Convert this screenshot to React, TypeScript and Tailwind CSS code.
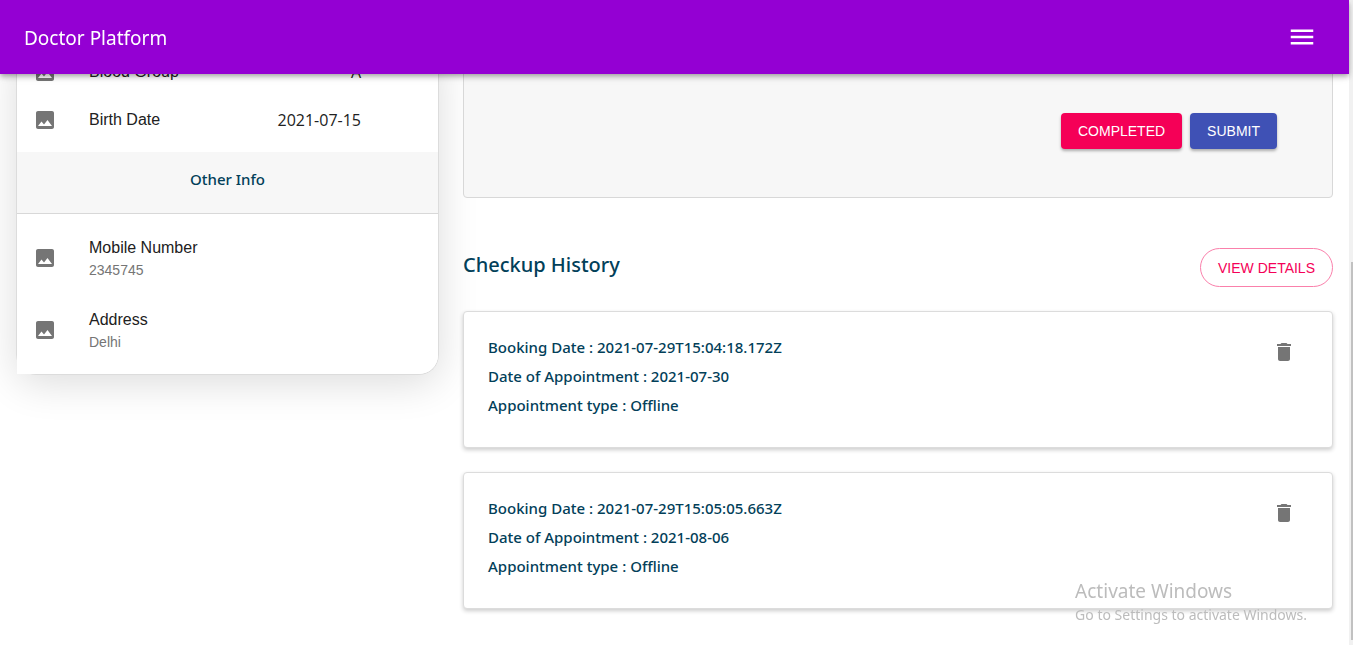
import React from "react";
import { MdDelete, MdImage, MdMenu } from "react-icons/md";

const vitals = [
  { label: "Blood Group", value: "A" },
  { label: "Birth Date", value: "2021-07-15" },
];

const otherInfo = [
  { label: "Mobile Number", value: "2345745" },
  { label: "Address", value: "Delhi" },
];

const bookings = [
  { booked: "2021-07-29T15:04:18.172Z", date: "2021-07-30", type: "Offline" },
  { booked: "2021-07-29T15:05:05.663Z", date: "2021-08-06", type: "Offline" },
];

function Header() {
  return (
    <header className="fixed top-0 right-1 left-0 z-10 flex h-[74px] items-center justify-between bg-[#9400d3] pr-8 pl-6 text-white shadow-[0_2px_4px_-1px_rgba(0,0,0,0.2),0_4px_5px_0_rgba(0,0,0,0.14),0_1px_10px_0_rgba(0,0,0,0.12)]">
      <h1 className="pt-0.5 font-['Noto_Sans',sans-serif] text-[19px] leading-8">Doctor Platform</h1>
      <button type="button" aria-label="Menu">
        <MdMenu className="size-[30px]" />
      </button>
    </header>
  );
}

function PatientCard() {
  return (
    <section className="rounded-b-[20px] border border-t-0 border-[#dcdcdc] shadow-[0_8px_40px_rgba(0,0,0,0.14)]">
      <ul className="bg-white pb-2">
        {vitals.map((row) => (
          <li key={row.label} className="flex h-12 items-center px-4">
            <MdImage className="mr-8 size-6 text-[#757575]" />
            <span className="flex-1 text-base">{row.label}</span>
            <span className="pr-[61px] font-['Open_Sans',sans-serif] text-base">{row.value}</span>
          </li>
        ))}
      </ul>
      <h2 className="border-b border-[#d8d8d8] bg-[#f7f7f7] pt-[15px] pb-[22px] text-center font-['Noto_Sans',sans-serif] text-[15px] leading-6 font-medium text-[#024059]">
        Other Info
      </h2>
      <ul className="rounded-br-[19px] bg-white py-2">
        {otherInfo.map((row) => (
          <li key={row.label} className="flex h-[72px] items-center px-4">
            <MdImage className="mr-8 size-6 text-[#757575]" />
            <div>
              <p className="text-base">{row.label}</p>
              <p className="text-sm text-[#757575]">{row.value}</p>
            </div>
          </li>
        ))}
      </ul>
    </section>
  );
}

function BookingCard({ booked, date, type }: { booked: string; date: string; type: string }) {
  return (
    <li className="flex items-start justify-between rounded border border-[#dcdcdc] bg-white px-6 shadow-[0_2px_4px_rgba(0,0,0,0.2)]">
      <div className="flex flex-col gap-[5px] pt-[23px] pb-[30px] font-['Noto_Sans',sans-serif] text-[15px] leading-6 font-medium text-[#024059]">
        <p>Booking Date : {booked}</p>
        <p>Date of Appointment : {date}</p>
        <p>Appointment type : {type}</p>
      </div>
      <button type="button" aria-label="Delete booking" className="mt-4 p-3 text-[#757575]">
        <MdDelete className="size-6" />
      </button>
    </li>
  );
}

function ActivationNotice() {
  return (
    <aside className="pointer-events-none fixed right-[46px] bottom-5 z-20 font-['Noto_Sans',sans-serif] text-[#bcbcbc]">
      <p className="text-[19px] leading-7">Activate Windows</p>
      <p className="text-sm leading-5">Go to Settings to activate Windows.</p>
    </aside>
  );
}

export default function App() {
  return (
    <div className="flex min-h-screen bg-white font-['Liberation_Sans',Arial,sans-serif] text-[#212121]">
      <Header />
      <main className="grid flex-1 grid-cols-3 items-start gap-6 px-4 pt-12">
        <PatientCard />
        <div className="col-span-2">
          <div className="flex justify-end gap-2 rounded-b border border-[#d8d8d8] bg-[#f7f7f7] pt-16 pr-[55px] pb-12 text-sm text-white">
            <button type="button" className="h-9 rounded bg-[#f50057] px-[17px] shadow-[0_2px_3px_rgba(0,0,0,0.3)]">
              COMPLETED
            </button>
            <button type="button" className="h-9 rounded bg-[#3f51b5] px-[17px] shadow-[0_2px_3px_rgba(0,0,0,0.3)]">
              SUBMIT
            </button>
          </div>
          <div className="mt-[50px] mb-6 flex items-start justify-between">
            <h2 className="font-['Noto_Sans',sans-serif] text-xl leading-[34px] font-medium text-[#024059]">Checkup History</h2>
            <button type="button" className="h-[39px] rounded-[20px] border border-[#fa80ab] px-[17px] text-sm text-[#f50057]">
              VIEW DETAILS
            </button>
          </div>
          <ul className="flex flex-col gap-6">
            {bookings.map((booking) => (
              <BookingCard key={booking.booked} {...booking} />
            ))}
          </ul>
        </div>
      </main>
      <div aria-hidden="true" className="flex w-1 flex-col items-end justify-end bg-[#f1f1f1] pb-[5px]">
        <div className="h-[59%] w-0.5 bg-[#c1c1c1]" />
      </div>
      <ActivationNotice />
    </div>
  );
}
